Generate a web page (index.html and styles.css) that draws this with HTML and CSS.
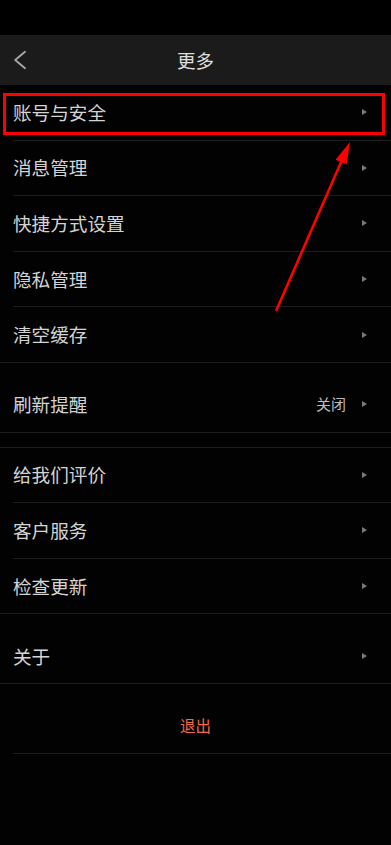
FILE: index.html
```html
<!DOCTYPE html>
<html lang="zh-CN">
<head>
<meta charset="utf-8">
<title>更多</title>
<link rel="stylesheet" href="styles.css">
</head>
<body>
<div class="page">
  <div class="status"></div>
  <div class="nav">
    <div class="nav-left">
      <svg class="back" width="14" height="20" viewBox="0 0 14 20"><polyline points="12,1.8 2.2,10 12,18.2" fill="none" stroke="#a8a8a8" stroke-width="1.8" stroke-linecap="round" stroke-linejoin="round"/></svg>
    </div>
    <div class="nav-title">更多</div>
    <div class="nav-right"></div>
  </div>

  <div class="group g1">
    <div class="row"><div class="row-inner"><span class="label">账号与安全</span><span class="chev"></span></div></div>
    <div class="row"><div class="row-inner"><span class="label">消息管理</span><span class="chev"></span></div></div>
    <div class="row"><div class="row-inner"><span class="label">快捷方式设置</span><span class="chev"></span></div></div>
    <div class="row"><div class="row-inner"><span class="label">隐私管理</span><span class="chev"></span></div></div>
    <div class="row"><div class="row-inner"><span class="label">清空缓存</span><span class="chev"></span></div></div>
  </div>

  <div class="group g2">
    <div class="row"><div class="row-inner"><span class="label">刷新提醒</span><span class="value">关闭</span><span class="chev"></span></div></div>
  </div>

  <div class="group g3">
    <div class="row"><div class="row-inner"><span class="label">给我们评价</span><span class="chev"></span></div></div>
    <div class="row"><div class="row-inner"><span class="label">客户服务</span><span class="chev"></span></div></div>
    <div class="row"><div class="row-inner"><span class="label">检查更新</span><span class="chev"></span></div></div>
  </div>

  <div class="group g4">
    <div class="row"><div class="row-inner"><span class="label">关于</span><span class="chev"></span></div></div>
  </div>

  <div class="logout">
    <div class="logout-inner">退出</div>
  </div>

  <div class="highlight"></div>
  <svg class="annot" width="391" height="845" viewBox="0 0 391 845">
    <line x1="276.5" y1="310" x2="342" y2="160" stroke="#ff0000" stroke-width="2.6" stroke-linecap="round"/>
    <polygon points="350,142 346.6,164.6 335.6,159.8" fill="#ff0000"/>
  </svg>
</div>
</body>
</html>
```

FILE: styles.css
```css
* { box-sizing: border-box; }
html, body {
  margin: 0;
  padding: 0;
  background: #020202;
}
body {
  font-family: "Noto Sans CJK SC", "Noto Sans", sans-serif;
  color: #d2d2d2;
}
.page {
  position: relative;
  width: 391px;
  height: 845px;
  overflow: hidden;
  background: #020202;
}
.status {
  height: 35px;
  background: #000;
}
.nav {
  height: 50px;
  background: #1b1b1b;
  display: grid;
  grid-template-columns: 60px 1fr 60px;
  align-items: center;
}
.nav-left {
  display: flex;
  align-items: center;
  padding-left: 13px;
}
.back { display: block; }
.nav-title {
  text-align: center;
  font-size: 18.5px;
  line-height: 24px;
  color: #dedede;
}
.group.g2 { margin-top: 14px; }
.group.g3 { margin-top: 14px; border-top: 1px solid #1d1d1d; }
.group.g4 { margin-top: 14.5px; }
.row {
  padding-left: 13px;
}
.row-inner {
  height: 55.6px;
  display: flex;
  align-items: center;
  padding-right: 24px;
  border-bottom: 1px solid #1d1d1d;
}
.row:last-child {
  border-bottom: 1px solid #1d1d1d;
}
.row:last-child .row-inner {
  border-bottom: none;
  height: 54.6px;
}
.label {
  flex: 1;
  font-size: 18.6px;
  line-height: 24px;
  color: #d4d4d4;
  margin-top: -1px;
}
.value {
  font-size: 15px;
  line-height: 20px;
  color: #bdbdbd;
  margin-right: 16px;
}
.chev {
  width: 0;
  height: 0;
  border-left: 5px solid #7a7a7a;
  border-top: 3.5px solid transparent;
  border-bottom: 3.5px solid transparent;
}
.logout {
  margin-top: 14.5px;
  padding-left: 13px;
}
.logout-inner {
  height: 55px;
  display: flex;
  align-items: center;
  justify-content: center;
  padding-right: 13px;
  padding-bottom: 1px;
  font-size: 15.5px;
  color: #ee6a48;
  border-bottom: 1px solid #1d1d1d;
}
.highlight {
  position: absolute;
  left: 3px;
  top: 93px;
  width: 382px;
  height: 42px;
  border: 3px solid #ff0000;
}
.annot {
  position: absolute;
  left: 0;
  top: 0;
  pointer-events: none;
}
```
